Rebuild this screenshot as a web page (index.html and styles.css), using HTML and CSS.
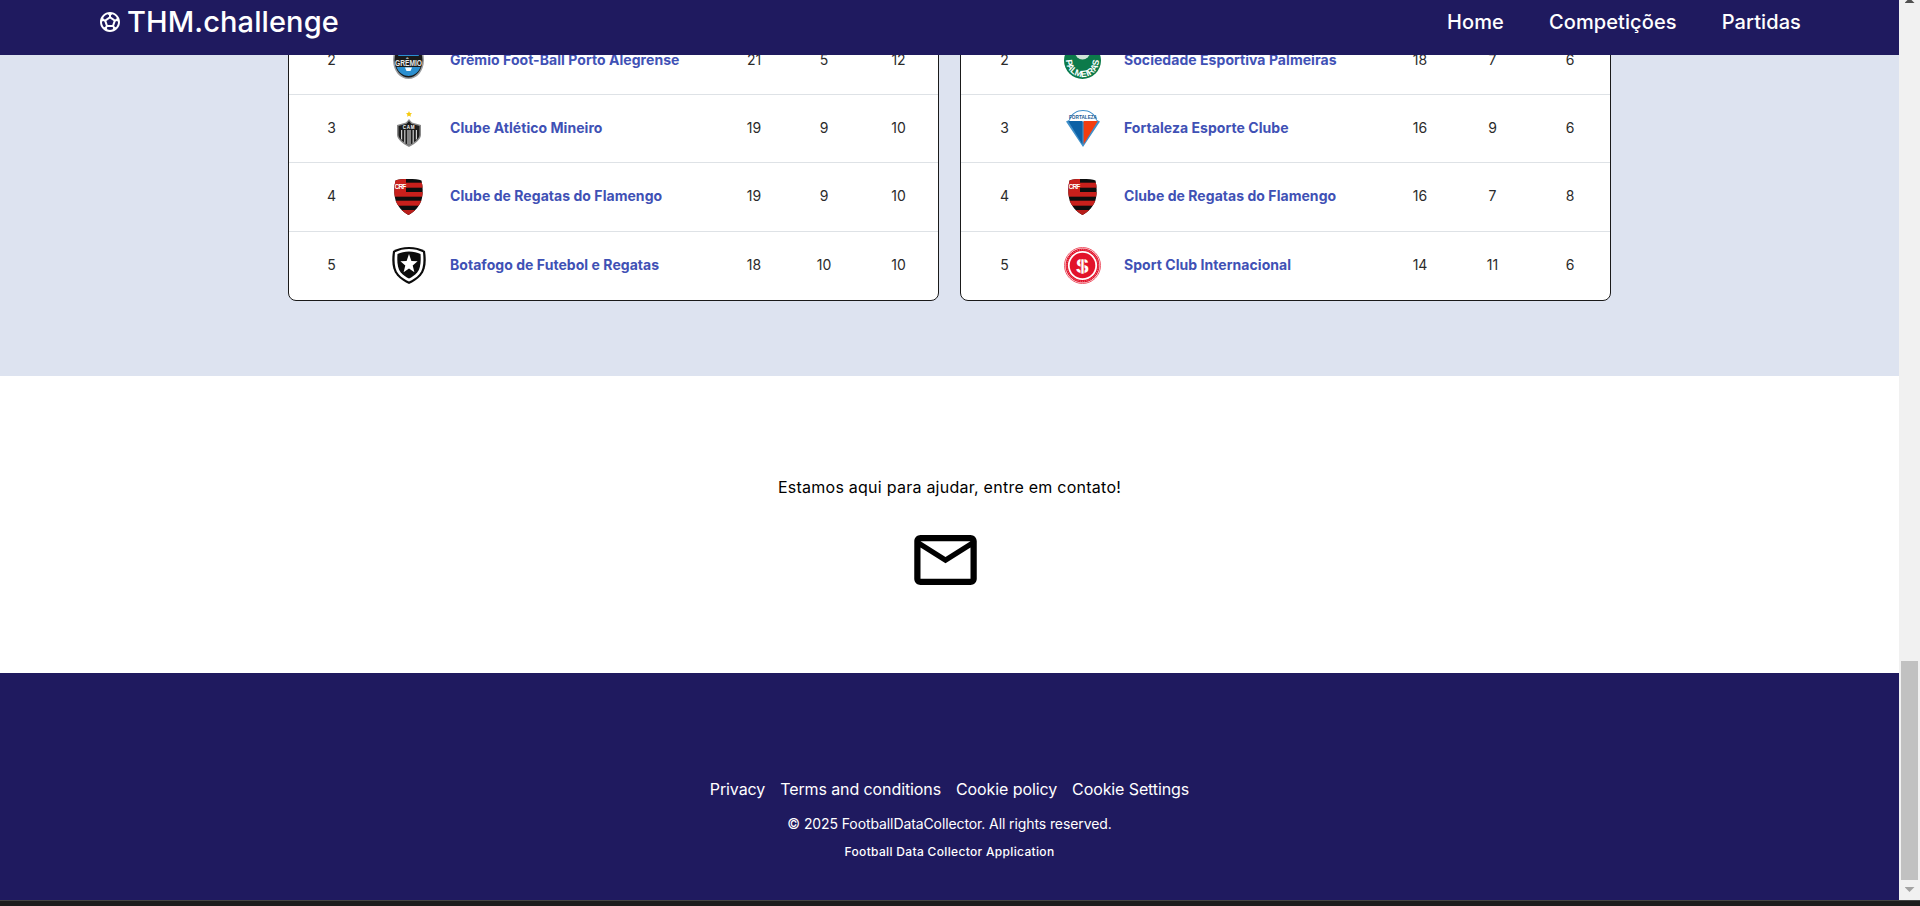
FILE: index.html
```html
<!DOCTYPE html>
<html lang="pt-BR">
<head>
<meta charset="utf-8">
<title>THM.challenge</title>
<link rel="stylesheet" href="styles.css">
</head>
<body>
<svg class="defs" aria-hidden="true">
  <defs>
    <clipPath id="fla-clip"><path d="M14.500 0C20 0 25 .4 27.500 1.500 29 8 29 14 28 19 26.500 27 20 33 14.500 36 9 33 2.500 27 1 19 0 14 0 8 1.500 1.500 4 .4 9 0 14.500 0z"/></clipPath>
    <symbol id="flamengo" viewBox="0 0 29 36">
      <g clip-path="url(#fla-clip)">
        <rect width="29" height="36" fill="#0d0d0d"/>
        <rect y="3.700" width="29" height="5" fill="#c8201c"/>
        <rect y="13" width="29" height="4.700" fill="#c8201c"/>
        <rect y="21.700" width="29" height="5" fill="#c8201c"/>
        <rect y="31" width="29" height="5" fill="#b81d1a"/>
        <rect x="0" y="0" width="12" height="13.700" fill="#c8201c"/>
        <text x="6" y="9.500" class="logo-text" font-size="6.500" fill="#fff" text-anchor="middle" letter-spacing="-.8">CRF</text>
      </g>
    </symbol>
  </defs>
</svg>

<div class="window">
  <div class="page">
    <header class="topbar">
      <a class="brand" href="#">
        <svg class="brand-icon" viewBox="0 0 24 24" fill="#fff"><path d="M12 2C6.48 2 2 6.48 2 12s4.48 10 10 10 10-4.48 10-10S17.52 2 12 2zm1 3.3 1.35-.95c1.820.56 3.370 1.760 4.380 3.340l-.39 1.340-1.350.46L13 6.700V5.300zm-3.350-.95L11 5.300v1.400L7.010 9.490l-1.350-.46-.39-1.340c1.010-1.570 2.560-2.770 4.380-3.340zM7.080 17.110l-1.140.1C4.730 15.810 4 13.990 4 12c0-.12.010-.23.020-.35l1-.73 1.380.48 1.460 4.340-.78 1.370zm7.420 2.480c-.79.26-1.630.41-2.500.41s-1.710-.15-2.500-.41l-.69-1.490.64-1.100h5.110l.64 1.110-.7 1.480zM14.270 15H9.730l-1.350-4.020L12 8.440l3.630 2.540L14.270 15zm3.790 2.210-1.140-.1-.79-1.370 1.460-4.340 1.390-.47 1 .73c.01.11.02.22.02.34 0 1.990-.73 3.810-1.940 5.210z"/></svg>
        <span>THM.challenge</span>
      </a>
      <nav class="nav">
        <a href="#">Home</a>
        <a href="#">Competições</a>
        <a href="#">Partidas</a>
      </nav>
    </header>

    <main class="rankings">
      <section class="card card-left">
        <div class="row">
          <span class="num">2</span>
          <span class="logo">
            <svg width="31" height="37" viewBox="0 0 31 37">
              <path d="M15.500 0C24 0 31 7 31 18c0 11-7 19-15.500 19S0 29 0 18C0 7 7 0 15.500 0z" fill="#9a9da0"/>
              <path d="M15.500 1.500C23 1.500 29.500 8 29.500 18c0 10-6.500 17.500-14 17.500S1.500 28 1.500 18C1.500 8 8 1.500 15.500 1.500z" fill="#1a1a1a"/>
              <path d="M5 14C8 6 23 6 26 14z" fill="#2b8fd0"/>
              <path d="M3.500 25h24c-2 6-7.500 9-12 9s-10-3-12-9z" fill="#2b8fd0"/>
              <path d="M12 25.500h7l-1.500 3.500h-4z" fill="#fff"/>
              <text x="15.500" y="23.500" class="logo-text" font-size="8.500" fill="#e8e8e8" text-anchor="middle" textLength="27" lengthAdjust="spacingAndGlyphs">GRÊMIO</text>
            </svg>
          </span>
          <a class="team" href="#">Grêmio Foot-Ball Porto Alegrense</a>
          <span class="num">21</span><span class="num">5</span><span class="num">12</span>
        </div>
        <div class="row">
          <span class="num">3</span>
          <span class="logo">
            <svg width="24" height="36" viewBox="0 0 24 36">
              <path d="M12 0l.9 1.900 2.100.3-1.500 1.500.4 2.100-1.900-1-1.900 1 .4-2.100L9 2.200l2.100-.3z" fill="#f6c90e"/>
              <path d="M12 8l3 3.500 9 2.500v10c0 4-6 9-12 12C6 33 0 28 0 24V14l9-2.500z" fill="#8a8a8a"/>
              <path d="M12 10l2.300 2.700 8.200 2.300v9c0 3.500-5.500 7.800-10.500 10.300C7 31.800 1.500 27.500 1.500 24v-9l8.200-2.300z" fill="#1c1c1c"/>
              <path d="M4 19v9l1.200 1V19zm3.200 0v12.600l1.200.8V19zm3.200 0v14.300l1.200.6V19zm2 0v14.900l1.200-.6V19zm3.200 0v13.400l1.200-.8V19zm3.200 0v10l1.200-1v-9z" fill="#cfcfcf"/>
              <text x="12" y="17.500" class="logo-text" font-size="4.500" fill="#fff" text-anchor="middle" letter-spacing=".8">CAM</text>
            </svg>
          </span>
          <a class="team" href="#">Clube Atlético Mineiro</a>
          <span class="num">19</span><span class="num">9</span><span class="num">10</span>
        </div>
        <div class="row">
          <span class="num">4</span>
          <span class="logo"><svg class="logo-fla"><use href="#flamengo"/></svg></span>
          <a class="team" href="#">Clube de Regatas do Flamengo</a>
          <span class="num">19</span><span class="num">9</span><span class="num">10</span>
        </div>
        <div class="row row-last">
          <span class="num">5</span>
          <span class="logo">
            <svg width="34" height="37" viewBox="0 0 34 37">
              <path d="M17 0c6 0 11.500 1.500 16 4 1.500 10 1 18.500-4 24.500C25.500 32.500 21 35 17 37c-4-2-8.500-4.500-12-8.500C0 22.500-.5 14 1 4c4.500-2.500 10-4 16-4z" fill="#0b0b0b"/>
              <path d="M17 2c-5.200 0-10 1.200-14 3.300-1 9.500-.5 17.200 3.700 22 3 3.500 6.800 5.700 10.300 7.300 3.500-1.600 7.300-3.800 10.300-7.300C31.500 22.500 32 14.800 31 5.300 27 3.200 22.200 2 17 2z" fill="#fff"/>
              <path d="M17 4.500c-4.400 0-8.200.9-11.500 2.500-.6 8 0 14.600 3.300 18.600 2.500 2.900 5.400 4.700 8.200 6 2.800-1.300 5.700-3.100 8.200-6 3.300-4 3.900-10.600 3.300-18.600-3.300-1.600-7.100-2.500-11.500-2.500z" fill="#0b0b0b"/>
              <path d="M17 7l2.400 6.900 6.200.3-4.900 4.300 1.700 6.700-5.400-3.700-5.400 3.700 1.700-6.700-4.900-4.300 6.200-.3z" fill="#fff"/>
            </svg>
          </span>
          <a class="team" href="#">Botafogo de Futebol e Regatas</a>
          <span class="num">18</span><span class="num">10</span><span class="num">10</span>
        </div>
      </section>

      <section class="card card-right">
        <div class="row">
          <span class="num">2</span>
          <span class="logo">
            <svg width="37" height="37" viewBox="0 0 37 37">
              <circle cx="18.500" cy="18.500" r="18.500" fill="#0c7a4a"/>
              <circle cx="18.500" cy="10" r="7.500" fill="#cfe4d8"/>
              <path id="pal-arc" d="M2 18.500A16.500 16.500 0 0 0 35 18.500" fill="none"/>
              <text class="logo-text" font-size="9" fill="#fff"><textPath href="#pal-arc" startOffset="50%" text-anchor="middle">PALMEIRAS</textPath></text>
            </svg>
          </span>
          <a class="team" href="#">Sociedade Esportiva Palmeiras</a>
          <span class="num">18</span><span class="num">7</span><span class="num">6</span>
        </div>
        <div class="row">
          <span class="num">3</span>
          <span class="logo">
            <svg width="34" height="37" viewBox="0 0 34 37">
              <path d="M3 10C5 3 11 0 17 0s12 3 14 10l3 1.500L17 37 0 11.500z" fill="#3f8fc9"/>
              <path d="M4 10C6 4 11 1 17 1s11 3 13 9l1.500 1.500H2.500z" fill="#fff"/>
              <path d="M2.200 11h14.200v23.300z" fill="#0b61a6"/>
              <path d="M31.800 11H17.600v23.300z" fill="#f23d0f"/>
              <text x="17" y="8.800" class="logo-text" font-size="6.200" fill="#1b5b93" text-anchor="middle" textLength="28" lengthAdjust="spacingAndGlyphs">FORTALEZA</text>
            </svg>
          </span>
          <a class="team" href="#">Fortaleza Esporte Clube</a>
          <span class="num">16</span><span class="num">9</span><span class="num">6</span>
        </div>
        <div class="row">
          <span class="num">4</span>
          <span class="logo"><svg class="logo-fla"><use href="#flamengo"/></svg></span>
          <a class="team" href="#">Clube de Regatas do Flamengo</a>
          <span class="num">16</span><span class="num">7</span><span class="num">8</span>
        </div>
        <div class="row row-last">
          <span class="num">5</span>
          <span class="logo">
            <svg width="37" height="37" viewBox="0 0 37 37">
              <circle cx="18.500" cy="18.500" r="18" fill="#fff" stroke="#ee5a6a" stroke-width="1"/>
              <circle cx="18.500" cy="18.500" r="15.800" fill="none" stroke="#e2132a" stroke-width="2.400"/>
              <circle cx="18.500" cy="18.500" r="15.800" fill="none" stroke="#fff" stroke-width=".8" stroke-dasharray="1 1.200" opacity=".6"/>
              <circle cx="18.500" cy="18.500" r="12.800" fill="#e2132a"/>
              <text x="18.500" y="25.500" class="logo-text" font-size="20" fill="#fff" text-anchor="middle">S</text>
              <text x="18.500" y="26.500" class="logo-text" font-size="22" fill="#fff" stroke="#e2132a" stroke-width=".7" text-anchor="middle">I</text>
            </svg>
          </span>
          <a class="team" href="#">Sport Club Internacional</a>
          <span class="num">14</span><span class="num">11</span><span class="num">6</span>
        </div>
      </section>
    </main>

    <section class="contact">
      <p class="contact-text">Estamos aqui para ajudar, entre em contato!</p>
      <svg class="mail" viewBox="0 0 24 24" fill="#000"><path d="M20 4H4c-1.100 0-1.990.9-1.990 2L2 18c0 1.100.9 2 2 2h16c1.100 0 2-.9 2-2V6c0-1.100-.9-2-2-2zm0 14H4V8l8 5 8-5v10zm-8-7L4 6h16l-8 5z"/></svg>
    </section>

    <footer class="footer">
      <nav class="footer-links">
        <a href="#">Privacy</a>
        <a href="#">Terms and conditions</a>
        <a href="#">Cookie policy</a>
        <a href="#">Cookie Settings</a>
      </nav>
      <p class="copyright">© 2025 FootballDataCollector. All rights reserved.</p>
      <p class="tagline">Football Data Collector Application</p>
    </footer>
  </div>

  <div class="scrollbar">
    <span class="arrow-up"></span>
    <span class="thumb"></span>
    <span class="arrow-down"></span>
  </div>
</div>
<div class="taskbar"></div>
</body>
</html>
```
FILE: styles.css
```css
* { box-sizing: border-box; }
html, body { height: 100%; }
body {
  margin: 0;
  height: 906px;
  overflow: hidden;
  display: flex;
  flex-direction: column;
  font-family: Inter, "Noto Sans", sans-serif;
  background: #fff;
  color: #000;
}
a { color: inherit; text-decoration: none; }
p { margin: 0; }
.defs { width: 0; height: 0; flex: none; }

.window { display: flex; height: 900px; flex: none; }
.page { position: relative; flex: 1; min-width: 0; overflow: hidden; display: flex; flex-direction: column; }

.topbar {
  position: absolute;
  inset: 0 0 auto 0;
  z-index: 2;
  height: 55px;
  padding: 0 98px 12px;
  display: flex;
  align-items: center;
  justify-content: space-between;
  background: #1f1a5f;
  color: #fff;
}
.brand { display: flex; align-items: center; gap: 5px; font-size: 29px; font-weight: 500; line-height: 1; letter-spacing: .1px; }
.brand-icon { width: 24px; height: 24px; }
.nav { display: flex; gap: 45px; font-size: 20px; font-weight: 500; letter-spacing: .1px; }

.rankings {
  flex: none;
  height: 376px;
  padding: 26px 0 0 288px;
  display: flex;
  gap: 21px;
  align-items: flex-start;
  background: #dde3f0;
}
.card {
  width: 651px;
  height: 275px;
  border: 1px solid #1a1a1a;
  border-radius: 8px;
  background: #fff;
  overflow: hidden;
}
.row {
  display: grid;
  align-items: center;
  height: 68.2px;
  border-bottom: 1px solid #dee2e6;
  font-size: 14px;
  color: #2b2b2b;
}
.row-last { border-bottom: 0; }
.card-left .row { grid-template-columns: 85px 69px 276px 70px 70px 79px; }
.card-right .row { grid-template-columns: 87px 69px 268px 70px 75px 80px; }
.num { text-align: center; margin-bottom: 3px; }
.logo { display: flex; justify-content: center; align-items: center; }
.logo svg { display: block; }
.logo-fla { width: 29px; height: 36px; }
.logo-text { font-family: "Liberation Sans", sans-serif; font-weight: 700; }
.team { padding-left: 7px; margin-bottom: 3px; font-size: 14px; font-weight: 700; letter-spacing: .05px; color: #3f51b5; white-space: nowrap; }

.contact {
  flex: none;
  height: 297px;
  padding-top: 99px;
  display: flex;
  flex-direction: column;
  align-items: center;
  background: #fff;
}
.contact-text { font-size: 16px; line-height: 24px; letter-spacing: .25px; }
.mail { width: 75px; height: 76px; margin: 23px 9px 0 0; }

.footer {
  flex: none;
  height: 227px;
  padding-top: 104px;
  display: flex;
  flex-direction: column;
  align-items: center;
  background: #1f1a5f;
  color: #fff;
}
.footer-links { display: flex; gap: 15px; font-size: 16px; line-height: 24px; letter-spacing: -.1px; }
.copyright { margin-top: 12px; font-size: 14px; line-height: 21px; letter-spacing: -.1px; }
.tagline { margin-top: 9px; font-size: 12px; line-height: 18px; font-weight: 500; letter-spacing: .33px; }

.scrollbar {
  flex: none;
  width: 21px;
  display: flex;
  flex-direction: column;
  align-items: center;
  background: #f1f1f1;
}
.arrow-up {
  width: 10px;
  height: 3px;
  background: #505050;
  clip-path: polygon(30% 0, 70% 0, 100% 100%, 0 100%);
}
.thumb { width: 17px; height: 219px; margin-top: 658px; background: #c1c1c1; }
.arrow-down {
  width: 10px;
  height: 5px;
  margin-top: 7px;
  background: #a3a3a3;
  clip-path: polygon(0 0, 100% 0, 50% 100%);
}
.taskbar { flex: none; height: 6px; background: #1c1c1c; border-top: 1px solid #444; }
```
